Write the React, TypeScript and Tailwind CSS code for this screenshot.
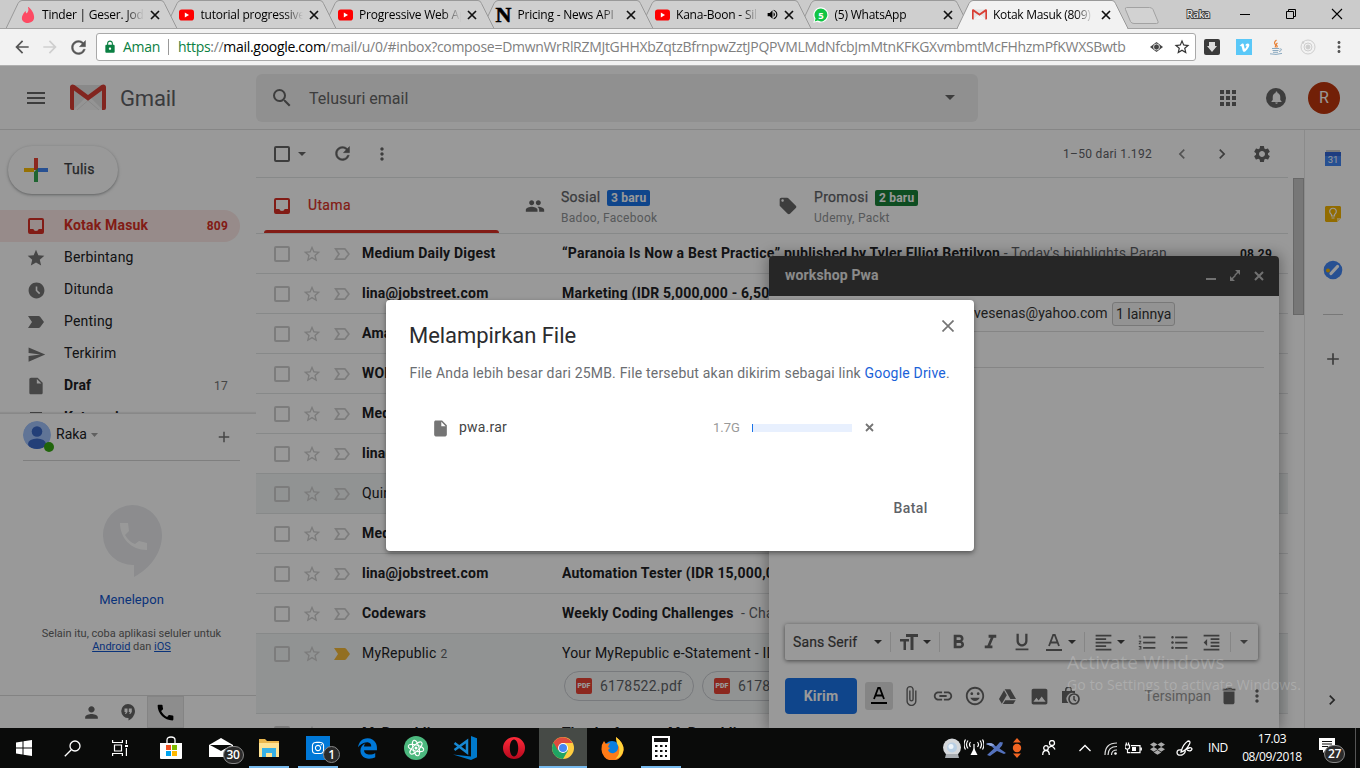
import React from 'react';
import {
  MdAccessTimeFilled, MdAdd, MdApps, MdArrowBack, MdArrowForward, MdAttachFile, MdCall, MdChevronLeft, MdChevronRight,
  MdDelete, MdFormatAlignLeft, MdFormatBold, MdFormatIndentDecrease, MdFormatItalic, MdFormatListBulleted,
  MdFormatListNumbered, MdFormatUnderlined, MdImage, MdInsertDriveFile, MdInsertEmoticon, MdLink, MdLocalOffer,
  MdLock, MdMenu, MdMoreVert, MdNotifications, MdPeople, MdPerson, MdSearch, MdSend, MdSettings, MdStar,
  MdStarBorder, MdVolumeUp,
} from 'react-icons/md';
import { FaDropbox, FaEdgeLegacy, FaInstagram, FaVimeoV } from 'react-icons/fa';
import { SiTinder } from 'react-icons/si';

const UI = "font-['Open_Sans','Noto_Sans',sans-serif]";
const BODY = "font-['Roboto','Liberation_Sans',sans-serif]";

function Reload({ className }: { className: string }) {
  return (
    <svg width="21" height="21" viewBox="0 0 24 24" className={className} fill="currentColor" stroke="currentColor" strokeWidth=".5">
      <path d="M17.650 6.350A7.958 7.958 0 0 0 12 4c-4.420 0-7.990 3.580-7.990 8s3.570 8 7.990 8c3.730 0 6.840-2.550 7.730-6h-2.080A5.990 5.990 0 0 1 12 18c-3.310 0-6-2.690-6-6s2.690-6 6-6c1.660 0 3.140.690 4.220 1.780L13 11h7V4z" />
    </svg>
  );
}

function GmailMark({ className }: { className: string }) {
  return (
    <svg className={className} viewBox="0 0 36 27" preserveAspectRatio="none">
      <path d="M3 1h30v25H3z" fill="#e4e4e4" />
      <path d="M3 26 15 14l3 2.500 3-2.500 12 12z" fill="#f7f7f7" />
      <path d="M7 26 18 16.500 29 26" fill="none" stroke="#d5d5d5" strokeWidth=".6" />
      <path d="M4 26H2a2 2 0 0 1-2-2V3C0 .8 2.500-.4 4.500 1L18 11 31.500 1C33.500-.4 36 .8 36 3v21a2 2 0 0 1-2 2h-2V6.500L18 16.700 4 6.500z" fill="#d93f35" />
    </svg>
  );
}

function YouTube() {
  return (
    <svg width="15" height="12" viewBox="0 0 15 12">
      <rect y=".5" width="15" height="11" rx="2.800" fill="#f00" />
      <path d="M5.800 3.600v4.800L10 6z" fill="#fff" />
    </svg>
  );
}

function WhatsApp() {
  return (
    <svg width="16" height="16" viewBox="0 0 16 16">
      <path d="M8 .3a7.600 7.600 0 1 1-3.600 14.400L.3 15.800l1.200-3.900A7.600 7.600 0 0 1 8 .3z" fill="#fff" />
      <path d="M8 1.400a6.500 6.500 0 1 1-3.300 12.200l-3 .8.900-2.900A6.500 6.500 0 0 1 8 1.400z" fill="#12c445" />
      <text x="8" y="11.500" textAnchor="middle" fontSize="9.500" fontWeight="700" fill="#fff" fontFamily="Open Sans, sans-serif">5</text>
    </svg>
  );
}

const Caret = ({ className = 'text-[#444]' }: { className?: string }) => (
  <svg width="8" height="4" viewBox="0 0 8 4" className={className}><path d="M0 0h8L4 4z" fill="currentColor" /></svg>
);

type TabData = { icon: React.ReactNode; title: string; active?: boolean; audio?: boolean; z: string; w: string };
const tabs: TabData[] = [
  { icon: <SiTinder size={16} color="#fd4a63" />, title: 'Tinder | Geser. Jodoh', z: 'z-[7]', w: 'w-[102px]' },
  { icon: <YouTube />, title: 'tutorial progressive w', z: 'z-[6]', w: 'w-[102px]' },
  { icon: <YouTube />, title: 'Progressive Web Apps', z: 'z-[5]', w: 'w-[102px]' },
  { icon: <span className="font-['Liberation_Serif',serif] text-[22px] font-bold leading-4 text-black [-webkit-text-stroke:.6px_black]">N</span>, title: 'Pricing - News API', z: 'z-[4]', w: 'w-[102px]' },
  { icon: <YouTube />, title: 'Kana-Boon - Silhouette', audio: true, z: 'z-[3]', w: 'w-[82px]' },
  { icon: <WhatsApp />, title: '(5) WhatsApp', z: 'z-[2]', w: 'w-[102px]' },
  { icon: <GmailMark className="h-[11px] w-[15px]" />, title: 'Kotak Masuk (809)', active: true, z: 'z-[8]', w: 'w-[100px]' },
];

function BrowserTab({ t }: { t: TabData }) {
  return (
    <div className={`relative flex h-[29px] w-[158.5px] shrink-0 items-center pl-[14px] ${t.z}`}>
      <svg className="absolute left-0 top-0" width="172" height="29" viewBox="0 0 172 29">
        <path d="M0 28.500 12 3.500Q13.500.5 16 .5H155Q157.500.5 158.500 3.500L171 28.500" fill={t.active ? '#f2f2f2' : '#cfcfcf'} stroke="#999" />
        {!t.active && <path d="M0 28.500H171" stroke="#a3a3a3" />}
        {t.active && <path d="M1 28.500H170" stroke="#f2f2f2" />}
      </svg>
      <span className="relative flex w-[16px] justify-center">{t.icon}</span>
      <span className={`relative ml-[6px] overflow-hidden whitespace-nowrap text-[12px] leading-4 text-black ${t.active ? 'tracking-[-0.3px]' : 'tracking-[-0.22px]'} ${t.w} [mask-image:linear-gradient(to_right,black_82%,transparent)]`}>{t.title}</span>
      {t.audio && <MdVolumeUp className="relative ml-[8px]" size={13} />}
      <span className="absolute left-[143px] top-[9px] flex">
        <svg width="12" height="12" viewBox="0 0 12 12"><path d="m2 2 8 8m0-8-8 8" stroke="#111" strokeWidth="1.700" /></svg>
      </span>
    </div>
  );
}

function Chrome() {
  return (
    <div className={`${UI} flex h-[66px] flex-col`}>
      <div className="flex h-[29px] border-b border-[#a3a3a3] bg-[#cbcbcb] pl-[6px]">
        {tabs.map((t) => <BrowserTab key={t.title} t={t} />)}
        <svg className="ml-[8px] mt-[7px] shrink-0" width="36" height="18" viewBox="0 0 36 18">
          <path d="M2.500.5h23q2.500 0 3.500 2l5 12q.8 2-1.500 2H10q-2.500 0-3.500-2L1.500 2.500Q.8.5 2.500.5z" fill="#d2d2d2" stroke="#a2a2a2" />
        </svg>
        <span className="ml-[27px] mt-[6px] w-[28px] text-[10.500px] leading-4 text-white [-webkit-text-stroke:2px_#444] [paint-order:stroke_fill]">Raka</span>
        <div className="ml-[24px] flex h-7 items-center gap-[34px]">
          <svg width="12" height="12"><path d="M1 6.500h10" stroke="#000" /></svg>
          <svg width="12" height="12"><path d="M1.500 3.500h7v7h-7zM3.500 3.500v-2h7v7h-2" stroke="#000" fill="none" /></svg>
          <svg width="12" height="12"><path d="m1 1 10 10M11 1 1 11" stroke="#000" strokeWidth="1.100" /></svg>
        </div>
      </div>
      <div className="flex h-[37px] items-center border-b border-[#b0b0b0] bg-[#f2f2f2] pl-3">
        <MdArrowBack size={20} className="text-[#555]" />
        <MdArrowForward size={20} className="ml-[8px] text-[#cfcfcf]" />
        <Reload className="ml-[8px] text-[#555]" />
        <div className="ml-[7px] flex h-[28px] w-[1100px] items-center rounded-[3px] border border-[#a9a9a9] bg-white">
          <MdLock size={14} className="ml-[6px] text-[#0b8043]" />
          <span className="ml-[6px] w-[45px] text-[14px] leading-5 tracking-[-0.3px] text-[#0b8043]">Aman</span>
          <span className="h-4 w-px bg-[#999]" />
          <span className="ml-[9px] w-[960px] whitespace-nowrap text-[14px] leading-5 tracking-[-0.3px] text-[#808080]">
            <span className="text-[#0b8043]">https</span>://<span className="text-black">mail.google.com</span>/mail/u/0/#inbox?compose=DmwnWrRlRZMJtGHHXbZqtzBfrnpwZztJPQPVMLMdNfcbJmMtnKFKGXvmbmtMcFHhzmPfKWXSBwtb
          </span>
          <svg className="ml-[12px] shrink-0" width="13" height="10" viewBox="0 0 13 10"><path d="M6.500 0 13 5l-6.500 5L0 5z" fill="#444" /><circle cx="6.500" cy="5" r="3" fill="none" stroke="#fff" strokeWidth=".8" /></svg>
          <MdStarBorder size={18} className="ml-[10px] shrink-0 text-[#333]" />
        </div>
        <span className="ml-[8px] flex size-4 items-center justify-center rounded-[2px] bg-[#3b3b3b]">
          <svg width="12" height="12"><path d="M3 1h6v4h2L6 11 1 5h2z" fill="#ddd" /></svg>
        </span>
        <span className="ml-4 flex size-4 items-center justify-center bg-[#5ac8f8]"><FaVimeoV size={11} color="#fff" /></span>
        <svg className="ml-4" width="16" height="16" fill="none">
          <path d="M8.500 1Q5.500 3.500 7 5T7 8.500M9.500 4Q7.500 5.500 8.700 6.500T8.500 8.500" stroke="#e8833a" strokeWidth="1.200" />
          <path d="M4 9.500h7M4.500 11.500h6M5 13.300h5M2 14.800q6 1.400 12-.4M11.500 10q3-.5 1.500 1.500-.7.800-2 1" stroke="#8aa9c0" />
        </svg>
        <svg className="ml-4" width="16" height="16" fill="none" stroke="#cecece"><circle cx="8" cy="8" r="7" /><circle cx="8" cy="8" r="4" /><circle cx="8" cy="8" r="2" fill="#cecece" /><circle cx="3" cy="3.500" r="1.200" fill="#cecece" stroke="none" /></svg>
        <MdMoreVert size={18} className="ml-[14px] text-[#555]" />
      </div>
    </div>
  );
}

const Importance = ({ filled, className }: { filled?: boolean; className: string }) => (
  <svg width="16" height="12" viewBox="0 0 16 12" className={className}>
    {filled
      ? <path d="M0 0h10.500q1 0 1.600.8L16 6l-3.900 5.200q-.6.800-1.600.8H0l4-6z" fill="currentColor" />
      : <path d="M1.600.9h8.800q.6 0 1 .5L14.900 6l-3.500 4.600q-.4.500-1 .5H1.600L5 6z" fill="none" stroke="currentColor" strokeWidth="1.700" />}
  </svg>
);

function InboxIcon() {
  return (
    <svg width="16" height="16" viewBox="0 0 16 16">
      <path fillRule="evenodd" d="M2 0h12a2 2 0 0 1 2 2v12a2 2 0 0 1-2 2H2a2 2 0 0 1-2-2V2a2 2 0 0 1 2-2zm0 2v9h3.300a2.800 2.800 0 0 0 5.400 0H14V2z" fill="currentColor" />
    </svg>
  );
}

const nav = [
  { label: 'Kotak Masuk', icon: <InboxIcon />, count: '809', kind: 'active' },
  { label: 'Berbintang', icon: <MdStar size={20} />, count: '', kind: '' },
  { label: 'Ditunda', icon: <MdAccessTimeFilled size={19} />, count: '', kind: '' },
  { label: 'Penting', icon: <Importance filled className="" />, count: '', kind: '' },
  { label: 'Terkirim', icon: <MdSend size={19} />, count: '', kind: '' },
  { label: 'Draf', icon: <MdInsertDriveFile size={22} />, count: '17', kind: 'bold' },
  { label: 'Kategori', icon: <span className="h-3 w-3 bg-[#757575]" />, count: '', kind: 'bold' },
];

function Sidebar() {
  return (
    <aside className="flex w-64 shrink-0 flex-col">
      <div className="h-[283px] overflow-hidden pt-4">
        <button className="ml-2 flex h-12 w-[110px] items-center rounded-full bg-white pl-4 shadow-[0_1px_2px_rgba(60,64,67,0.3),0_1px_3px_1px_rgba(60,64,67,0.15)]">
          <svg width="24" height="24"><path d="M10 0h4v12h-4z" fill="#ea4335" /><path d="M0 10h10v4H0z" fill="#fbbc05" /><path d="M14 10h10v4H14z" fill="#4285f4" /><path d="M10 14v10h4V10z" fill="#34a853" /></svg>
          <span className="ml-4 pb-[2px] text-[14px] tracking-[0.25px] text-[#3c4043] [-webkit-text-stroke:.25px_#3c4043]">Tulis</span>
        </button>
        <nav className="mt-4 flex w-60 flex-col">
          {nav.map((n) => (
            <div key={n.label} className={`flex h-8 shrink-0 items-center rounded-r-full pr-3 text-[14px] tracking-[0.2px] ${n.kind === 'active' ? 'bg-[#fce8e6] font-bold text-[#d93025]' : n.kind === 'bold' ? 'font-bold text-[#202124]' : 'text-[#202124]'}`}>
              <span className={`ml-[26px] flex w-5 justify-center ${n.kind === 'active' ? '' : 'text-[#757575]'}`}>{n.icon}</span>
              <span className="ml-[18px] flex-1 pb-[2px]">{n.label}</span>
              <span className={`text-[12px] ${n.kind === 'active' ? '' : 'font-normal text-[#757575]'}`}>{n.count}</span>
            </div>
          ))}
        </nav>
      </div>
      <div className="flex flex-1 flex-col border-t border-[#e3e3e3] shadow-[0_-1px_1px_rgba(0,0,0,0.08)]">
        <div className="ml-[23px] mr-4 flex h-[47px] border-b border-[#d4d4d4] pt-[7px]">
          <span className="relative">
            <svg width="28" height="28"><defs><clipPath id="av"><circle cx="14" cy="14" r="14" /></clipPath></defs><g clipPath="url(#av)"><circle cx="14" cy="14" r="14" fill="#a1c2fa" /><circle cx="14" cy="10.500" r="5.300" fill="#3b69c9" /><ellipse cx="14" cy="23" rx="9" ry="5.500" fill="#3b69c9" /></g></svg>
            <span className="absolute left-[21px] top-[21px] size-[10px] rounded-full bg-[#36a813]" />
          </span>
          <span className="ml-[5px] pt-[3px] text-[14px] leading-5 text-[#202124]">Raka</span>
          <span className="ml-[4px] mt-[12px]"><svg width="7" height="4"><path d="M0 0h7L3.500 4z" fill="#a0a0a0" /></svg></span>
          <MdAdd size={18} className="ml-auto mr-[7px] mt-[7px] text-[#757575]" />
        </div>
        <div className="flex flex-1 flex-col items-center">
          <svg className="mr-[-8px] mt-[44px]" width="60" height="72" viewBox="0 0 60 72"><path d="M30 0a30 30 0 0 1 30 30c0 17-11 33-28 42V60A30 30 0 1 1 30 0z" fill="#e9eaed" /><path d="M18 18h8l1 8-4 4q4 7 10 9l4-3 8 2v7C29 45 18 33 18 18z" fill="#fff" /></svg>
          <span className="ml-[7px] mt-[13px] text-[13px] leading-5 tracking-[0.05px] text-[#15c]">Menelepon</span>
          <p className="ml-[7px] mt-[17px] text-center text-[11px] leading-[13px] text-[#666]">Selain itu, coba aplikasi seluler untuk<br /><span className="text-[#15c] underline">Android</span> dan <span className="text-[#15c] underline">iOS</span></p>
        </div>
        <div className="flex h-[33px] border-t border-[#dadada] pl-[73px] text-[#666]">
          <span className="flex w-[37px] items-center justify-center"><MdPerson size={19} /></span>
          <span className="flex w-[36px] items-center justify-center">
            <svg width="14" height="17" viewBox="0 0 14 17"><path d="M7 0a7 7 0 0 1 7 7c0 4-3 8-6.500 9.500V14A7 7 0 1 1 7 0z" fill="currentColor" /><path d="M3.500 4.500h3V8L5 10H4l.8-2H3.500zM7.800 4.500h3V8l-1.500 2h-1L9 8H7.800z" fill="#fff" /></svg>
          </span>
          <span className="ml-px flex w-[37px] items-center justify-center border border-[#ddd] bg-[#ececec] text-black"><MdCall size={21} /></span>
        </div>
      </div>
    </aside>
  );
}

type Mail = { from: string; subject: string; snippet?: string; time?: string; read?: boolean; n?: string; files?: string[]; imp?: boolean };
const mails: Mail[] = [
  { from: 'Medium Daily Digest', subject: '“Paranoia Is Now a Best Practice” published by Tyler Elliot Bettilyon', snippet: " - Today's highlights Paran", time: '08.29' },
  { from: 'lina@jobstreet.com', subject: 'Marketing (IDR 5,000,000 - 6,500,000)' },
  { from: 'Amazon', subject: '' },
  { from: 'WORKSHOP', subject: '' },
  { from: 'Medium', subject: '' },
  { from: 'lina@jobstreet.com', subject: '' },
  { from: 'Quincy Larson', subject: '', read: true },
  { from: 'Medium', subject: '' },
  { from: 'lina@jobstreet.com', subject: 'Automation Tester (IDR 15,000,000)' },
  { from: 'Codewars', subject: 'Weekly Coding Challenges', snippet: '  - Challenge' },
  { from: 'MyRepublic', n: '2', subject: 'Your MyRepublic e-Statement - ID 6178', read: true, imp: true, files: ['6178522.pdf', '6178522.pdf'] },
  { from: 'MyRepublic', subject: 'Thanks for your MyRepublic', read: false },
];

function MailRow({ m }: { m: Mail }) {
  return (
    <div className={`flex shrink-0 flex-col border-b border-[#e2e4e5] ${m.files ? 'h-20' : 'h-10'} ${m.read ? 'bg-[#f2f5f5]' : 'bg-white'}`}>
      <div className="flex h-[39px] shrink-0 items-center pl-[18px] pr-4 text-[14px] tracking-[0.2px] text-[#202124]">
        <span className="mt-px size-4 shrink-0 rounded-[2px] border-2 border-[#cfcfcf]" />
        <MdStarBorder size={20} className="ml-3 mt-px shrink-0 text-[#cfcfcf]" />
        <Importance filled={m.imp} className={`ml-3 mt-px shrink-0 ${m.imp ? 'text-[#f4b93a]' : 'text-[#cfcfcf]'}`} />
        <span className={`ml-3 w-[200px] shrink-0 whitespace-nowrap ${m.read ? '' : 'font-bold'}`}>{m.from}{m.n && <span className="ml-1 text-[12px] text-[#5f6368]">{m.n}</span>}</span>
        <span className="flex-1 overflow-hidden whitespace-pre"><span className={m.read ? '' : 'font-bold'}>{m.subject}</span><span className="text-[#5f6368]">{m.snippet}</span></span>
        <span className="text-[12px] font-bold">{m.time}</span>
      </div>
      {m.files && (
        <div className="flex gap-2 pl-[308px]">
          {m.files.map((f, i) => (
            <span key={i} className="mt-[-2px] flex h-[30px] w-[130px] items-center rounded-full border border-[#c8cbd0] pl-[11px] text-[14px] tracking-[0.25px] text-[#5f6368]">
              <span className="mr-2 flex size-4 items-center justify-center rounded-[2px] bg-[#ea4335] text-[7px] font-black tracking-normal text-white">PDF</span>{f}
            </span>
          ))}
        </div>
      )}
    </div>
  );
}

function Inbox() {
  return (
    <main className="flex w-[1048px] shrink-0 flex-col">
      <div className="mr-4 flex h-12 shrink-0 items-center border-b border-[#e2e4e5] pl-[18px] text-[#666]">
        <span className="size-4 rounded-[2px] border-2 border-[#666]" />
        <span className="ml-2"><Caret className="text-[#666]" /></span>
        <Reload className="ml-[26px]" />
        <MdMoreVert size={20} className="ml-[19px]" />
        <span className="ml-auto text-[12px] tracking-[0.3px] text-[#5f6368]">1–50 dari 1.192</span>
        <MdChevronLeft size={20} className="ml-5 text-[#8a8a8a]" />
        <MdChevronRight size={20} className="ml-5" />
        <MdSettings size={20} className="ml-5 mr-4" />
      </div>
      <div className="flex min-h-0 flex-1">
        <div className="flex w-[1032px] shrink-0 flex-col">
          <div className="flex h-14 shrink-0 border-b border-[#e2e4e5] pl-2 text-[14px] tracking-[0.2px]">
            <div className="flex w-[235px] flex-col text-[#d93025]">
              <div className="flex h-[53px] items-center pl-[10px] pt-[3px]"><InboxIcon /><span className="ml-[18px] pb-px tracking-[0.35px] [-webkit-text-stroke:.2px_#d93025]">Utama</span></div>
              <div className="h-[3px] rounded-t-[3px] bg-[#d93025]" />
            </div>
            <div className="ml-[18px] flex w-[253px] pl-[8px]">
              <MdPeople size={20} className="mt-[18px] text-[#666]" />
              <div className="ml-4 pt-[10px]">
                <div className="flex h-5 items-center"><span className="w-[38px] whitespace-nowrap pb-px tracking-[0.25px] text-[#5f6368] [-webkit-text-stroke:.25px_#5f6368]">Sosial</span><span className="ml-2 rounded-[2px] bg-[#1a73e8] px-1 text-[12px] font-bold leading-4 text-white">3 baru</span></div>
                <div className="text-[12px] leading-5 tracking-[0.3px] text-[#909396]">Badoo, Facebook</div>
              </div>
            </div>
            <div className="flex pl-[8px]">
              <MdLocalOffer size={20} className="mt-[18px] text-[#666]" />
              <div className="ml-4 pt-[10px]">
                <div className="flex h-5 items-center"><span className="w-[53px] whitespace-nowrap pb-px tracking-[0.3px] text-[#5f6368] [-webkit-text-stroke:.25px_#5f6368]">Promosi</span><span className="ml-2 rounded-[2px] bg-[#188038] px-1 text-[12px] font-bold leading-4 text-white">2 baru</span></div>
                <div className="text-[12px] leading-5 tracking-[0.3px] text-[#909396]">Udemy, Packt</div>
              </div>
            </div>
          </div>
          <div className="flex flex-1 flex-col overflow-hidden">
            {mails.map((m, i) => <MailRow key={i} m={m} />)}
          </div>
        </div>
        <div className="ml-[5px] h-[137px] w-[11px] border border-[#adadad] bg-[#c6c6c6]" />
      </div>
    </main>
  );
}

function SidePanel() {
  return (
    <aside className="flex flex-1 flex-col items-center border-l border-[#e8e8e8] pl-px">
      <svg className="mt-[20px]" width="16" height="16"><path d="M1 0h14v3H1z" fill="#ccc" /><path d="M0 2h16v14H0z" fill="#4285f4" /><path d="M0 2h16v4H0z" fill="#3367d6" /><text x="8" y="13" fontSize="9.500" fill="#fff" textAnchor="middle" fontFamily="Roboto">31</text></svg>
      <svg className="mt-[40px]" width="16" height="16"><path d="M1 0h14l1 1v11l-4 4H1l-1-1V1z" fill="#f4b400" /><path d="M12 16v-4h4z" fill="#ffe08a" /><path d="M6.500 10V8.500a3.300 3.300 0 1 1 3 0V10zm0 2h3" fill="none" stroke="#fff" strokeWidth="1.200" /></svg>
      <svg className="mt-[38px]" width="20" height="20"><circle cx="10" cy="10" r="9.300" fill="#4285f4" /><path d="m8 13.500 6.500-7" stroke="#fff" strokeWidth="3.200" strokeLinecap="round" /><circle cx="5" cy="10.500" r="2" fill="#f4b400" /></svg>
      <div className="mt-[34px] h-px w-5 bg-[#c8c8c8]" />
      <MdAdd size={20} className="mt-[34px] text-[#666]" />
      <MdChevronRight size={20} className="mb-[18px] mr-[2px] mt-auto text-[#444]" />
    </aside>
  );
}

const Divider = ({ className }: { className: string }) => <span className={`h-5 w-px shrink-0 bg-[#e0e0e0] ${className}`} />;
const Cell = ({ className, children }: { className: string; children: React.ReactNode }) => (
  <span className={`flex shrink-0 items-center justify-center ${className}`}>{children}</span>
);

const Underlined = ({ className }: { className: string }) => (
  <svg width="16" height="18" viewBox="0 0 16 18" className={className}><path d="M3 12 7.200 1h1.600L13 12M4.500 8.500h7" fill="none" stroke="currentColor" strokeWidth="1.800" /><path d="M0 16h16" stroke="currentColor" strokeWidth="2" /></svg>
);

function Compose() {
  return (
    <section className="absolute left-[769px] top-[190px] flex h-[472px] w-[510px] flex-col rounded-t-[4px] bg-white shadow-[0_0_14px_2px_rgba(0,0,0,0.32)]">
      <header className="flex h-10 shrink-0 items-center rounded-t-[4px] bg-[#404040] pl-4 pr-[15px] text-[14px] font-bold tracking-[0.15px] text-[#e8e8e8]">
        <span className="flex-1 pb-[2px]">workshop Pwa</span>
        <svg width="58" height="12" viewBox="0 0 58 12"><path d="M0 8h10v2H0z" fill="#bdbdbd" /><path d="M29 0h5v5l-1.900-1.900-2.900 2.900-1-1 2.900-2.900zM24 6l1.900 1.900L28.800 5l1 1-2.900 2.900L29 11h-5z" fill="#bdbdbd" /><path d="m49 2 8 8m0-8-8 8" stroke="#bdbdbd" strokeWidth="2" /></svg>
      </header>
      <div className="ml-4 mr-[15px] flex h-9 shrink-0 items-center border-b border-[#dedede] pl-[189px] text-[14px] text-[#333]">
        <span className="w-[134px] whitespace-nowrap tracking-[0.04px]">vesenas@yahoo.com</span>
        <span className="ml-[4px] rounded-[3px] border border-[#c8c8c8] bg-[#f5f5f5] px-[3px] leading-[22px]">1 lainnya</span>
      </div>
      <div className="ml-4 mr-[15px] h-9 shrink-0 border-b border-[#dedede]" />
      <div className="flex-1" />
      <div className="ml-4 flex h-9 w-[473px] shrink-0 items-center rounded-[2px] bg-white pl-2 text-[#666] shadow-[0_1px_4px_rgba(0,0,0,0.55)]">
        <span className="w-[75px] text-[14px] tracking-[0.1px] text-[#444] [-webkit-text-stroke:.2px_#444]">Sans Serif</span>
        <Cell className="ml-[5px] w-[10px]"><Caret /></Cell>
        <Divider className="ml-[7px]" />
        <Cell className="ml-[5px] w-[26px]"><svg width="18" height="16"><path d="M6 0h12v3h-4.500v13h-3V3H6zM0 5h9v2.500H6V16H3.500V7.500H0z" fill="currentColor" /></svg></Cell>
        <Cell className="w-[10px]"><Caret /></Cell>
        <Divider className="ml-[7px]" />
        <Cell className="ml-[2px] w-8"><MdFormatBold size={23} /></Cell>
        <Cell className="w-8"><MdFormatItalic size={23} /></Cell>
        <Cell className="w-8"><MdFormatUnderlined size={22} /></Cell>
        <Cell className="ml-[3px] w-[26px]"><Underlined className="mt-[2px]" /></Cell>
        <Cell className="w-[10px]"><Caret /></Cell>
        <Divider className="ml-[7px]" />
        <Cell className="ml-[5px] w-[26px]"><MdFormatAlignLeft size={21} /></Cell>
        <Cell className="w-[10px]"><Caret /></Cell>
        <Cell className="ml-[5px] w-8"><MdFormatListNumbered size={21} /></Cell>
        <Cell className="w-8"><MdFormatListBulleted size={21} /></Cell>
        <Cell className="w-8"><MdFormatIndentDecrease size={21} /></Cell>
        <Divider className="ml-[3px]" />
        <Cell className="ml-[8px] w-[10px]"><Caret className="text-[#666]" /></Cell>
      </div>
      <div className="flex h-[68px] shrink-0 items-center pl-4 pr-2 pt-[4px] text-[#666]">
        <button className="h-9 w-[72px] rounded-[4px] bg-[#1a73e8] text-[14px] font-bold tracking-[0.2px] text-white">Kirim</button>
        <Cell className="ml-2 h-7 w-7 rounded-[3px] bg-[#dedede]"><Underlined className="text-black" /></Cell>
        <Cell className="ml-[2px] w-8"><MdAttachFile size={22} /></Cell>
        <Cell className="w-8"><MdLink size={22} /></Cell>
        <Cell className="w-8"><MdInsertEmoticon size={22} /></Cell>
        <Cell className="w-8"><svg width="17" height="15" viewBox="0 0 17 15"><path d="M5.700.3h5.600L17 10h-5.600z" fill="currentColor" /><path d="M5 1.300 7.800 6.200 2.800 14.800 0 10z" fill="currentColor" /><path d="M6.200 11.200h10.400L14.300 15H3.900z" fill="currentColor" /></svg></Cell>
        <Cell className="w-8"><MdImage size={21} /></Cell>
        <Cell className="w-8"><svg width="18" height="18" viewBox="0 0 18 18"><path d="M3 4V3a3.500 3.500 0 0 1 7 0v1h3v2.500A5.800 5.800 0 0 0 6.500 16H0V4zm1.500 0h4V3a2 2 0 0 0-4 0z" fill="currentColor" /><circle cx="12" cy="12" r="5" fill="none" stroke="currentColor" strokeWidth="1.700" /><path d="M12 9v3.500l2 1.500" fill="none" stroke="currentColor" strokeWidth="1.500" /></svg></Cell>
        <span className="ml-auto pr-1 text-[14px] tracking-[0.05px] text-[#999]">Tersimpan</span>
        <Cell className="w-7"><MdDelete size={22} /></Cell>
        <Cell className="w-7"><MdMoreVert size={20} /></Cell>
      </div>
    </section>
  );
}

function AttachDialog() {
  return (
    <section className="absolute left-[386px] top-[234px] flex h-[251px] w-[588px] flex-col rounded-[4px] bg-white pl-6 shadow-[0_2px_5px_rgba(0,0,0,0.45)]">
      <div className="flex h-[63px] items-center pt-[8px]">
        <h1 className="ml-[-1px] flex-1 text-[22px] font-normal tracking-[-0.05px] text-[#2b2c2f]">Melampirkan File</h1>
        <svg className="mb-[19px] mr-[20px]" width="12" height="12"><path d="m.5.5 11 11m0-11-11 11" stroke="#757575" strokeWidth="1.700" /></svg>
      </div>
      <p className="ml-[-0.5px] h-5 whitespace-nowrap text-[14px] leading-5 tracking-[0.19px] text-[#6b6e72]">File Anda lebih besar dari 25MB. File tersebut akan dikirim sebagai link <span className="text-[#1a62d8]">Google Drive</span>.</p>
      <div className="mt-[34px] flex h-5 items-center pl-[21px]">
        <MdInsertDriveFile size={19} className="mt-[2px] text-[#757575]" />
        <span className="ml-[9px] w-[254px] text-[14px] tracking-[0.2px] text-[#444]">pwa.rar</span>
        <span className="w-[27px] whitespace-nowrap pt-px text-[13px] text-[#999]">1.7G</span>
        <span className="ml-3 mt-[2px] flex h-2 w-[100px] bg-[#e8f0fe]"><span className="w-px bg-[#1a73e8]" /></span>
        <svg className="ml-[13px] mt-px" width="9" height="9"><path d="m1 1 7 7m0-7L1 8" stroke="#757575" strokeWidth="1.800" /></svg>
      </div>
      <div className="mt-[61px] pl-[483.5px] text-[14px] font-medium leading-5 tracking-[0.4px] text-[#5f6368]">Batal</div>
    </section>
  );
}

function Gmail() {
  return (
    <div className={`${BODY} relative flex h-[662px] flex-col overflow-hidden bg-white`}>
      <header className="flex h-16 shrink-0 items-center border-b border-[#e0e0e0] pl-6">
        <MdMenu size={24} className="text-[#666]" />
        <GmailMark className="ml-[22px] h-[27px] w-9" />
        <span className="ml-[14px] w-[136px] pt-[2px] text-[22px] tracking-[-0.2px] text-[#5f6368]">Gmail</span>
        <div className="flex h-12 w-[722px] items-center rounded-[6px] bg-[#f1f1f1] pl-[14px] text-[#666]">
          <MdSearch size={24} />
          <span className="ml-[15px] flex-1 pt-[2px] text-[16px]">Telusuri email</span>
          <span className="mr-[23px]"><svg width="10" height="5"><path d="M0 0h10L5 5z" fill="currentColor" /></svg></span>
        </div>
        <MdApps size={24} className="ml-[238px] text-[#666]" />
        <span className="ml-[26px] flex size-5 items-center justify-center rounded-full bg-[#666] text-white"><MdNotifications size={15} /></span>
        <span className="ml-[22px] flex size-8 items-center justify-center rounded-full bg-[#bf360c] pt-px text-[16px] text-white">R</span>
      </header>
      <div className="flex min-h-0 flex-1">
        <Sidebar />
        <Inbox />
        <SidePanel />
      </div>
      <Compose />
      <div className="absolute inset-0 bg-black/40" />
      <div className={`${UI} absolute left-[1067px] top-[583px] whitespace-nowrap text-white/20`}>
        <div className="text-[19px] leading-[27px] tracking-[0.1px]">Activate Windows</div>
        <div className="text-[14px] leading-[18px] tracking-[0.13px]">Go to Settings to activate Windows.</div>
      </div>
      <AttachDialog />
    </div>
  );
}

const Badge = ({ n, className }: { n: string; className: string }) => (
  <span className={`absolute flex items-center justify-center rounded-full border border-[#888] bg-[#2b2b2b] text-[12px] font-semibold leading-none tracking-[-0.3px] text-white ${className}`}>{n}</span>
);

const TaskIcon = ({ running, active, children, w = 'w-[49px]' }: { running?: boolean; active?: boolean; children: React.ReactNode; w?: string }) => (
  <span className={`flex h-10 shrink-0 flex-col items-center ${w}`}>
    <span className={`relative flex h-[38px] w-12 items-center justify-center pt-[2px] ${active ? 'bg-[#464a46]' : ''}`}>{children}</span>
    <span className={`h-[2px] ${active ? 'w-12' : 'w-10'} ${running || active ? 'bg-[#76b9ed]' : ''}`} />
  </span>
);

function Taskbar() {
  return (
    <footer className={`${UI} flex h-10 bg-[#0a0b0a] text-white`}>
      <TaskIcon w="w-12"><svg width="16" height="16"><path d="m0 2.500 6.500-1v6H0zM7.500 1.300 16 0v7.500H7.500zM0 8.500h6.500v6L0 13.600zM7.500 8.500H16V16l-8.500-1.300z" fill="#fff" /></svg></TaskIcon>
      <TaskIcon w="w-12"><svg width="17" height="17" fill="none" stroke="#fff" strokeWidth="1.300"><circle cx="11" cy="6" r="5" /><path d="M7.300 9.700.8 16.200" /></svg></TaskIcon>
      <TaskIcon w="w-12"><svg width="16" height="16" fill="none" stroke="#fff" strokeWidth="1.200"><path d="M0 2.500h11M0 13.500h11M2.500 5h7v6h-7zM.6 0v2M10.400 0v2M.6 16v-2M10.400 16v-2M14.400 0v4M14.400 8v8" /><path d="M13 5h3v2h-3z" fill="#fff" stroke="none" /></svg></TaskIcon>
      <TaskIcon w="w-[53px]"><svg width="24" height="24" viewBox="0 0 24 24"><path d="M8 7V4q0-3 4-3t4 3v3" fill="none" stroke="#fff" strokeWidth="1.300" /><path d="M1 7h22v15q0 1-1 1H2q-1 0-1-1z" fill="#fff" /><path d="M7 9h5v5H7z" fill="#f25022" /><path d="M13 9h5v5h-5z" fill="#7fba00" /><path d="M7 15h5v5H7z" fill="#00a4ef" /><path d="M13 15h5v5h-5z" fill="#ffb900" /></svg></TaskIcon>
      <TaskIcon w="w-[47px]"><svg width="24" height="20" viewBox="0 0 24 20"><path d="M0 7 12 0l12 7v12H0z" fill="#fff" /><path d="M1 7h22l-11 6z" fill="#0a0b0a" /></svg><Badge n="30" className="left-[26px] top-[18px] h-[18px] w-[21px]" /></TaskIcon>
      <TaskIcon w="w-[50px]" running><svg width="22" height="20" viewBox="0 0 22 20"><path d="M1 1h6l2 2h12v16H1z" fill="#e9b64d" /><path d="M1 5h20v14H1z" fill="#fde293" /><path d="M4 10h14v9h-4v-4H8v4H4z" fill="#35b0e5" /></svg></TaskIcon>
      <TaskIcon w="w-12" running><span className="flex size-6 items-center justify-center bg-[#0078d7]"><FaInstagram size={14} /></span><Badge n="1" className="left-[29px] top-[18px] size-[17px]" /></TaskIcon>
      <TaskIcon w="w-[50px]"><FaEdgeLegacy size={21} color="#0078d7" /></TaskIcon>
      <TaskIcon w="w-12"><svg width="24" height="24"><circle cx="12" cy="12" r="12" fill="#4cb87e" /><g fill="none" stroke="#fff" strokeWidth="1"><ellipse cx="12" cy="12" rx="8" ry="3" transform="rotate(15 12 12)" /><ellipse cx="12" cy="12" rx="8" ry="3" transform="rotate(75 12 12)" /><ellipse cx="12" cy="12" rx="8" ry="3" transform="rotate(135 12 12)" /></g><circle cx="12" cy="12" r="1.500" fill="#fff" /></svg></TaskIcon>
      <TaskIcon w="w-[50px]"><svg width="24" height="24" viewBox="0 0 24 24"><path d="M18 0l6 2.300v19L18 24 0 18.500l18 2z" fill="#007acc" /><path d="M1.500 7 14 16.500V5L1.500 14" fill="none" stroke="#1788d2" strokeWidth="2.500" /></svg></TaskIcon>
      <TaskIcon w="w-12"><svg width="22" height="22" viewBox="0 0 22 22"><defs><linearGradient id="op" x2="0" y2="1"><stop stopColor="#ff2b3a" /><stop offset="1" stopColor="#b5081d" /></linearGradient></defs><path fillRule="evenodd" d="M11 0a11 11 0 1 1 0 22 11 11 0 0 1 0-22zm0 2.500C8.500 2.500 6.800 6.500 6.800 11s1.700 8.500 4.200 8.500 4.200-4 4.200-8.500S13.500 2.500 11 2.500z" fill="url(#op)" /></svg></TaskIcon>
      <TaskIcon w="w-[50px]" active><svg width="22" height="22" viewBox="0 0 22 22"><circle cx="11" cy="11" r="11" fill="#ffcd40" /><path d="M11 11 1.500 5.500A11 11 0 0 0 11 22l5-8.500z" fill="#1fa463" /><path d="M1.500 5.500A11 11 0 0 1 20.500 6H11l-5 7.500z" fill="#dd4b3e" /><circle cx="11" cy="11" r="5" fill="#fff" /><circle cx="11" cy="11" r="4" fill="#4587f3" /></svg></TaskIcon>
      <TaskIcon w="w-12"><svg width="23" height="23" viewBox="0 0 23 23"><circle cx="11" cy="12" r="8" fill="#0a7fe0" /><path d="M15 0q8 6 7.500 13A11 11 0 0 1 .5 12Q.5 7 3 4l2 3 4-1-2 4 2 1-2 2q2 4 6 3 5-2 4-8z" fill="#ff7b17" /><path d="M15 0q8 6 7.500 13-1 7-8 9 5-5 3.500-12-3-4-3-10z" fill="#ffd43a" /></svg></TaskIcon>
      <TaskIcon w="w-[50px]" running><svg width="18" height="24" viewBox="0 0 18 24"><path d="M0 0h18v24H0z" fill="#fff" /><path d="M2 2h14v4H2zM3 9h2.500v2H3zM8 9h2.500v2H8zM13 9h2v2h-2zM3 14h2.500v2H3zM8 14h2.500v2H8zM13 14h2v2h-2zM3 19h2.500v2H3zM8 19h2.500v2H8zM13 19h2v2h-2z" fill="#111" /></svg></TaskIcon>
      <div className="ml-auto flex items-center">
        <svg width="20" height="20"><circle cx="10" cy="9.500" r="9" fill="#d5d8db" /><path d="M4 16h12l1 4H3z" fill="#a8adb2" /><circle cx="10" cy="9.500" r="5" fill="#b8cfe4" /><circle cx="9" cy="8.500" r="2.500" fill="#eef5fb" /></svg>
        <svg className="ml-[2px]" width="20" height="18" fill="none" stroke="#fff" strokeWidth="1.200"><path d="M6.500 3q-2 2.500 0 5M4 1.500q-3 4 0 8M1.500.5q-3 5 0 10M13.500 3q2 2.500 0 5M16 1.500q3 4 0 8M18.500.5q3 5 0 10" /><path d="M10 5v6" /><path d="m10 9 3.500 7h-7z" fill="#fff" stroke="none" /></svg>
        <svg className="ml-[2px]" width="20" height="16" viewBox="0 0 20 16"><path d="M0 4q4-2 7 0l3 2.500L14 2l3 .5-1 3-2.500 3L20 13l-2 1-7-3-7 5-3-1 7-6.500L5 6z" fill="#5472bd" /><path d="M0 4q4-2 7 0l1.500 1.200L5 6z" fill="#91a7dc" /></svg>
        <svg className="ml-[6px]" width="10" height="20" fill="#f26522"><path d="M5 0l4 4.500H1zM5 20l4-4.500H1z" /><circle cx="5" cy="10" r="4.200" /></svg>
        <svg className="ml-[20px]" width="14" height="16" fill="none" stroke="#fff" strokeWidth="1.300"><circle cx="10" cy="3" r="2.500" /><circle cx="4" cy="8" r="2.300" /><path d="M.7 15q0-4.500 3.300-4.500T7.300 15M7 7.500q3.500-3 6 2" /></svg>
        <svg className="ml-[23px]" width="12" height="8" fill="none" stroke="#fff" strokeWidth="1.300"><path d="m.5 7 5.500-5.500L11.500 7" /></svg>
        <svg className="ml-[13px]" width="13" height="13" fill="none" stroke="#ddd" strokeWidth="1.200"><path d="M1 13Q1 1 13 1M4 13Q4 4.500 13 4.500M7.500 13q0-5 5.500-5" /><circle cx="11.500" cy="11.500" r="1.300" fill="#fff" stroke="none" /></svg>
        <svg className="ml-[8px]" width="17" height="13" fill="none" stroke="#fff" strokeWidth="1.200"><path d="M6 3.600h9v7H6M16.300 5.500v3M0 3h4.500v3Q2.300 8.500 0 6zM1.300 3V.5M3.500 3V.5M2.500 7v3.600h3" /><path d="M7 5h4v4H7z" fill="#fff" stroke="none" /></svg>
        <FaDropbox size={15} color="#aaa" className="ml-[8px]" />
        <svg className="ml-[11px]" width="17" height="17" fill="none" stroke="#fff" strokeWidth="1.300"><path d="M5 12Q7 4 12 1q3 0 1.500 3Q10 11 5 12zM6 10q-5-1-5 2.500T6 15q4-2 3-5M9 10q6-4 7-1-1 3-5 1" /></svg>
        <span className="ml-[15px] w-[22px] text-[12px] tracking-[-0.4px]">IND</span>
        <div className="ml-[11px] w-[62px] whitespace-nowrap text-center text-[12px] leading-[18px] tracking-[-0.4px]">17.03<br />08/09/2018</div>
        <span className="relative ml-[16px] mr-[20px] h-6 w-[16px]">
          <svg width="16" height="16" className="mt-[2px]"><path d="M0 0h16v12H7l-3 3v-3H0z" fill="#fff" /><path d="M3 3.500h10M3 6h10M3 8.500h6" stroke="#111" /></svg>
          <Badge n="27" className="left-[5px] top-[9px] h-[18px] w-[21px]" />
        </span>
        <span className="mr-1 h-10 w-px bg-[#555]" />
      </div>
    </footer>
  );
}

export default function App() {
  return (
    <div className="flex h-[768px] w-[1360px] flex-col overflow-hidden bg-white">
      <Chrome />
      <Gmail />
      <Taskbar />
    </div>
  );
}
